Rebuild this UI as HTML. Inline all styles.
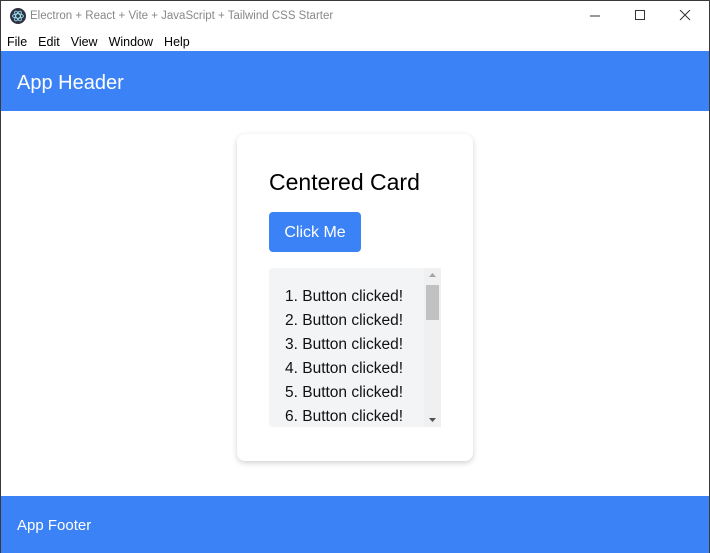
<!DOCTYPE html>
<html><head><style>
*{box-sizing:border-box;margin:0;padding:0}
body{width:710px;height:553px;overflow:hidden;font-family:"Liberation Sans",sans-serif;background:#fff;position:relative}
.win{position:absolute;inset:0;border:1px solid #3a3a3a;}
.title{position:absolute;left:0;top:0;width:708px;height:31px;background:#fff;}
.title span{position:absolute;left:29px;top:9px;font-size:11.5px;color:#888}
.menu{position:absolute;top:34px;left:6px;font-size:12.5px;color:#000}
.menu span{margin-right:11px}
.hdr{position:absolute;left:0;top:50px;width:708px;height:60px;background:#3b82f6;color:#fff;font-size:20px;padding:21px 16px}
.ftr{position:absolute;left:0;top:495px;width:708px;height:57px;background:#3b82f6;color:#fff;font-size:15px;padding:21px 16px}
.card{position:absolute;left:236px;top:133px;width:236px;height:327px;background:#fff;border-radius:8px;box-shadow:0 2px 6px rgba(0,0,0,.18)}
.card h2{position:absolute;left:32px;top:35px;font-weight:normal;font-size:23px;color:#000}
.btn{position:absolute;left:32px;top:78px;width:92px;height:40px;background:#3b82f6;border-radius:4px;color:#fff;font-size:16px;text-align:center;line-height:42px}
.list{position:absolute;left:32px;top:134px;width:172px;height:159px;background:#f3f4f6;border-radius:4px 0 0 4px;overflow:hidden}
.list .it{position:absolute;left:16px;font-size:15.5px;color:#111}
.list .sb{position:absolute;left:155px;top:0;width:17px;height:159px;background:#f0f0f0}
.list .thumb{position:absolute;left:2px;top:17px;width:13px;height:35px;background:#c1c1c1}
</style></head><body>
<div class="win">
<div class="title">
<svg style="position:absolute;left:9px;top:7px" width="16" height="16" viewBox="0 0 16 16"><circle cx="8" cy="8" r="8" fill="#2f3242"/><ellipse cx="8" cy="8" rx="5.5" ry="2.2" fill="none" stroke="#9feaf9" stroke-width=".8"/><ellipse cx="8" cy="8" rx="5.5" ry="2.2" fill="none" stroke="#9feaf9" stroke-width=".8" transform="rotate(60 8 8)"/><ellipse cx="8" cy="8" rx="5.5" ry="2.2" fill="none" stroke="#9feaf9" stroke-width=".8" transform="rotate(-60 8 8)"/></svg>
<span>Electron + React + Vite + JavaScript + Tailwind CSS Starter</span>
<svg style="position:absolute;left:589px;top:9px" width="110" height="12"><line x1="0" y1="6" x2="10" y2="6" stroke="#333"/><rect x="45.5" y="0.5" width="9" height="9" fill="none" stroke="#333"/><path d="M90 0L100 10M100 0L90 10" stroke="#333"/></svg>
</div>
<div class="menu"><span>File</span><span>Edit</span><span>View</span><span>Window</span><span>Help</span></div>
<div class="hdr">App Header</div>
<div class="card">
<h2>Centered Card</h2>
<div class="btn">Click Me</div>
<div class="list">
<div class="it" style="top:20px">1. Button clicked!</div>
<div class="it" style="top:44px">2. Button clicked!</div>
<div class="it" style="top:68px">3. Button clicked!</div>
<div class="it" style="top:92px">4. Button clicked!</div>
<div class="it" style="top:116px">5. Button clicked!</div>
<div class="it" style="top:140px">6. Button clicked!</div>
<div class="sb"><div class="thumb"></div>
<svg style="position:absolute;left:4px;top:4px" width="9" height="151"><path d="M1 5L4.5 1L8 5Z" fill="#a3a3a3"/><path d="M1 146L4.5 150L8 146Z" fill="#505050"/></svg></div>
</div>
</div>
<div class="ftr">App Footer</div>
</div>
</body></html>
